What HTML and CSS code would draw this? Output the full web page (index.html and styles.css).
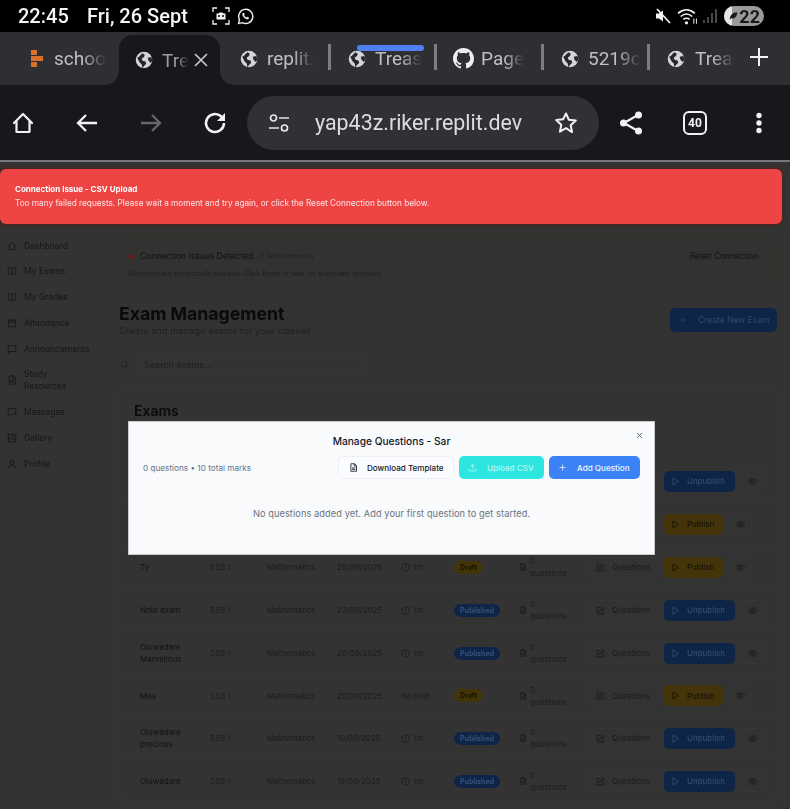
FILE: index.html
```html
<!DOCTYPE html>
<html lang="en">
<head>
<meta charset="utf-8">
<title>Exam Management</title>
<link rel="stylesheet" href="styles.css">
</head>
<body>
<svg class="defs" width="0" height="0" aria-hidden="true">
  <symbol id="globe" viewBox="0 0 24 24"><circle cx="12" cy="12" r="11" fill="#d4d5d8"/><path d="M3 9c3-1 4-4 7-6l3 2-1 3-3 2 1 3 4 1 1 3-3 3-2 3-1-5-3-3z M17 9l5-1 1 5-2 3-3-3z" fill="#26272b"/></symbol>
  <symbol id="i-home" viewBox="0 0 24 24"><path d="M3 12 12 3l9 9M5.500 10v11h13V10" fill="none" stroke="currentColor" stroke-width="2.200" stroke-linejoin="round" stroke-linecap="round"/></symbol>
  <symbol id="i-book" viewBox="0 0 24 24"><path d="M12 6c-2-2-5-2-9-2v15c4 0 7 0 9 2 2-2 5-2 9-2V4c-4 0-7 0-9 2zM12 6v15" fill="none" stroke="currentColor" stroke-width="2"/></symbol>
  <symbol id="i-cal" viewBox="0 0 24 24"><path d="M4 5h16v16H4zM4 10h16M8 2v5M16 2v5" fill="none" stroke="currentColor" stroke-width="2"/></symbol>
  <symbol id="i-msg" viewBox="0 0 24 24"><path d="M3 4h18v14H8l-5 4z" fill="none" stroke="currentColor" stroke-width="2" stroke-linejoin="round"/></symbol>
  <symbol id="i-file" viewBox="0 0 24 24"><path d="M5 2h10l5 5v15H5zM14 2v6h6M8 13h9M8 17h9" fill="none" stroke="currentColor" stroke-width="2.200" stroke-linejoin="round"/></symbol>
  <symbol id="i-img" viewBox="0 0 24 24"><path d="M3 3h18v18H3zM3 17l6-6 5 5 3-2 4 4" fill="none" stroke="currentColor" stroke-width="2.200"/><circle cx="15" cy="8" r="2" fill="currentColor"/></symbol>
  <symbol id="i-user" viewBox="0 0 24 24"><circle cx="12" cy="8" r="5" fill="none" stroke="currentColor" stroke-width="2"/><path d="M4 22c0-5 4-7 8-7s8 2 8 7" fill="none" stroke="currentColor" stroke-width="2"/></symbol>
  <symbol id="i-search" viewBox="0 0 24 24"><circle cx="11" cy="11" r="8" fill="none" stroke="currentColor" stroke-width="2"/><path d="m17 17 5 5" stroke="currentColor" stroke-width="2"/></symbol>
  <symbol id="i-plus" viewBox="0 0 24 24"><path d="M12 4v16M4 12h16" stroke="currentColor" stroke-width="2"/></symbol>
  <symbol id="i-clock" viewBox="0 0 24 24"><circle cx="12" cy="12" r="10" fill="none" stroke="currentColor" stroke-width="2"/><path d="M12 6v6l4 2" fill="none" stroke="currentColor" stroke-width="2"/></symbol>
  <symbol id="i-edit" viewBox="0 0 24 24"><path d="M12 4H3v17h17v-9" fill="none" stroke="currentColor" stroke-width="2.400"/><path d="m9 15 1-4L19 2l3 3-9 9z" fill="none" stroke="currentColor" stroke-width="2.200" stroke-linejoin="round"/></symbol>
  <symbol id="i-play" viewBox="0 0 24 24"><path d="M5 3l15 9-15 9z" fill="none" stroke="currentColor" stroke-width="2" stroke-linejoin="round"/></symbol>
  <symbol id="i-eye" viewBox="0 0 24 24"><path d="M1 12s4-7 11-7 11 7 11 7-4 7-11 7S1 12 1 12z" fill="none" stroke="currentColor" stroke-width="2"/><circle cx="12" cy="12" r="3.500" fill="none" stroke="currentColor" stroke-width="2"/></symbol>
  <symbol id="i-upload" viewBox="0 0 24 24"><path d="M3 15v6h18v-6M12 16V4M7 9l5-5 5 5" fill="none" stroke="currentColor" stroke-width="2"/></symbol>
</svg>

<header class="status soft">
  <span class="time">22:45</span>
  <span class="date">Fri, 26 Sept</span>
  <svg class="st-shot" viewBox="0 0 18 18"><path d="M1 5V1h4M13 1h4v4M17 13v4h-4M5 17H1v-4" fill="none" stroke="#f2f2f2" stroke-width="1.300"/><path d="M4.500 6.500h2l1-1h3l1 1h2v6h-9z" fill="#f2f2f2"/><circle cx="7" cy="9" r="1" fill="#000"/><circle cx="11" cy="9" r="1" fill="#000"/></svg>
  <svg class="st-wa" viewBox="0 0 24 24"><path d="M2 22l1.500-5.500A10 10 0 1 1 7.500 20.600z" fill="none" stroke="#f2f2f2" stroke-width="2" stroke-linejoin="round"/><path d="M8.500 7c-1.500 1-1.200 3 .5 5.500s4 4 6 3.500 2-2 1.800-2.500l-2.300-1.200-1 1.200c-1.500-.5-2.800-1.800-3.500-3.300l.9-1.100L10 7z" fill="#f2f2f2"/></svg>
  <span class="st-spacer"></span>
  <svg class="st-mute" viewBox="0 0 16 16"><path d="M1 5.500h3L8 2.500v11l-4-3H1z" fill="#f2f2f2"/><path d="M2 1l13 14" stroke="#f2f2f2" stroke-width="1.800"/><path d="M10 5l4 6" stroke="#000" stroke-width="1"/></svg>
  <svg class="st-wifi" viewBox="0 0 20 16"><path d="M1 5c5-4.500 11-4.500 16 0M3.500 8c3.500-3 7.500-3 11 0M6 10.800c2-1.500 4-1.500 6 0" fill="none" stroke="#f2f2f2" stroke-width="1.500"/><circle cx="9" cy="14" r="1.500" fill="#f2f2f2"/><path d="M16 10v5M18.500 10v5" stroke="#ddd" stroke-width="1"/></svg>
  <svg class="st-signal" viewBox="0 0 15 16"><path d="M1 12v3M5 9v6M9 5v10M13 1v14" stroke="#77787a" stroke-width="1.200"/></svg>
  <span class="battery"><span class="battery-fill"></span><svg class="battery-leaf" viewBox="0 0 12 12"><path d="M1 11C1 5 5 1 11 1c0 6-4 9-8 8z" fill="#1a1a1a"/></svg><span class="battery-num">22</span></span>
</header>

<nav class="tabs soft">
  <div class="tab tab-first">
    <svg class="favicon" viewBox="0 0 12 17"><path d="M0 0h6v5H0zM0 6h12v5H0zM0 12h6v5H0z" fill="#d9702c"/></svg>
    <span class="tab-text">schoo</span>
  </div>
  <div class="tab tab-active">
    <svg class="favicon"><use href="#globe"/></svg>
    <span class="tab-text tab-text-short">Tre</span>
    <svg class="tab-close" viewBox="0 0 14 14"><path d="M1 1l12 12M13 1 1 13" stroke="#c8c9cc" stroke-width="1.700"/></svg>
  </div>
  <div class="tab tab-sep">
    <svg class="favicon"><use href="#globe"/></svg>
    <span class="tab-text">replit.</span>
  </div>
  <div class="tab tab-sep">
    <svg class="favicon"><use href="#globe"/></svg>
    <span class="tab-text">Treas</span>
  </div>
  <div class="tab tab-sep tab-wide">
    <svg class="favicon fav-gh" viewBox="0 0 16 16"><path fill="#eeeeef" d="M8 0C3.580 0 0 3.580 0 8c0 3.540 2.290 6.530 5.470 7.590.4.070.55-.17.55-.38 0-.19-.01-.82-.01-1.490-2.010.37-2.530-.49-2.690-.94-.09-.23-.48-.94-.82-1.130-.28-.15-.68-.52-.01-.53.63-.01 1.080.58 1.230.82.72 1.210 1.870.87 2.330.66.070-.52.28-.87.51-1.070-1.780-.2-3.640-.89-3.640-3.950 0-.87.31-1.590.82-2.150-.08-.2-.36-1.020.08-2.120 0 0 .67-.21 2.200.82.64-.18 1.320-.27 2-.27.68 0 1.360.09 2 .27 1.530-1.040 2.200-.82 2.200-.82.44 1.100.16 1.920.08 2.120.51.56.82 1.270.82 2.150 0 3.070-1.870 3.750-3.650 3.950.29.25.54.73.54 1.480 0 1.070-.01 1.930-.01 2.200 0 .21.15.46.55.38A8.013 8.013 0 0 0 16 8c0-4.420-3.580-8-8-8z"/></svg>
    <span class="tab-text">Page</span>
  </div>
  <div class="tab tab-sep">
    <svg class="favicon"><use href="#globe"/></svg>
    <span class="tab-text">5219c</span>
  </div>
  <div class="tab tab-sep tab-last">
    <svg class="favicon"><use href="#globe"/></svg>
    <span class="tab-text">Treas</span>
  </div>
  <svg class="tab-new" viewBox="0 0 18 18"><path d="M9 0v18M0 9h18" stroke="#f2f2f3" stroke-width="2"/></svg>
  <span class="tab-progress"></span>
</nav>

<div class="toolbar soft">
  <div class="tool-group">
    <svg class="tool"><use href="#i-home"/></svg>
    <svg class="tool" viewBox="0 0 24 24"><path d="M22 12H3M11 4l-8 8 8 8" fill="none" stroke="currentColor" stroke-width="2.300"/></svg>
    <svg class="tool tool-off" viewBox="0 0 24 24"><path d="M2 12h19M13 4l8 8-8 8" fill="none" stroke="currentColor" stroke-width="2.300"/></svg>
    <svg class="tool" viewBox="0 0 24 24"><path d="M21 12a9 9 0 1 1-3-6.700L21 8" fill="none" stroke="currentColor" stroke-width="2.500"/><path d="M22 2v8h-8z" fill="currentColor"/></svg>
  </div>
  <div class="url">
    <svg class="url-tune" viewBox="0 0 20 18"><circle cx="4.500" cy="4" r="3" fill="none" stroke="#e6e6e8" stroke-width="1.700"/><path d="M10 4h10M0 14h10" stroke="#e6e6e8" stroke-width="1.700"/><circle cx="15.500" cy="14" r="3" fill="none" stroke="#e6e6e8" stroke-width="1.700"/></svg>
    <span class="url-text">yap43z.riker.replit.dev</span>
    <svg class="url-star" viewBox="0 0 24 24"><path d="M12 2.500l2.900 6.300 6.900.8-5.100 4.700 1.400 6.800L12 17.100l-6.100 3.500 1.400-6.800-5.100-4.700 6.900-.8z" fill="none" stroke="#f2f2f3" stroke-width="2" stroke-linejoin="round"/></svg>
  </div>
  <div class="tool-group">
    <svg class="tool" viewBox="0 0 24 24"><path d="M19 4 5 12l14 8" fill="none" stroke="currentColor" stroke-width="2.300"/><circle cx="19.500" cy="4" r="3.500" fill="currentColor"/><circle cx="4.500" cy="12" r="3.500" fill="currentColor"/><circle cx="19.500" cy="20" r="3.500" fill="currentColor"/></svg>
    <span class="tab-count">40</span>
    <svg class="tool" viewBox="0 0 24 24"><circle cx="12" cy="4.500" r="2.700" fill="currentColor"/><circle cx="12" cy="12" r="2.700" fill="currentColor"/><circle cx="12" cy="19.500" r="2.700" fill="currentColor"/></svg>
  </div>
</div>
<div class="rule"></div>

<div class="page soft">
  <aside class="sidebar">
    <a class="side-item"><svg class="side-icon"><use href="#i-home"/></svg>Dashboard</a>
    <a class="side-item"><svg class="side-icon"><use href="#i-book"/></svg>My Exams</a>
    <a class="side-item"><svg class="side-icon"><use href="#i-book"/></svg>My Grades</a>
    <a class="side-item"><svg class="side-icon"><use href="#i-cal"/></svg>Attendance</a>
    <a class="side-item"><svg class="side-icon"><use href="#i-msg"/></svg>Announcements</a>
    <a class="side-item side-item-tall"><svg class="side-icon"><use href="#i-file"/></svg><span>Study<br>Resources</span></a>
    <a class="side-item"><svg class="side-icon"><use href="#i-msg"/></svg>Messages</a>
    <a class="side-item"><svg class="side-icon"><use href="#i-img"/></svg>Gallery</a>
    <a class="side-item"><svg class="side-icon"><use href="#i-user"/></svg>Profile</a>
  </aside>

  <main class="main">
    <section class="alert">
      <div class="alert-body">
        <div class="alert-title"><span class="dot"></span><span>Connection Issues Detected</span><small>(5 failed requests)</small></div>
        <p class="alert-note">Requests are temporarily blocked. Click Reset or wait for automatic recovery.</p>
      </div>
      <span class="alert-btn">Reset Connection</span>
    </section>

    <section class="head">
      <div>
        <h1>Exam Management</h1>
        <p class="sub">Create and manage exams for your classes</p>
      </div>
      <span class="create"><svg class="create-plus"><use href="#i-plus"/></svg>Create New Exam</span>
    </section>

    <div class="search">
      <svg class="search-icon"><use href="#i-search"/></svg>
      <span class="search-input">Search exams...</span>
    </div>

    <section class="card">
      <h2>Exams</h2>
      <div class="rows">
        <div class="row">
          <div class="actions">
            <span class="act act-q"></span>
            <span class="act act-blue"><svg class="a-icon"><use href="#i-play"/></svg>Unpublish</span>
            <span class="act act-eye"><svg class="eye-icon"><use href="#i-eye"/></svg></span>
          </div>
        </div>
        <div class="row">
          <div class="actions">
            <span class="act act-q"></span>
            <span class="act act-gold"><svg class="a-icon"><use href="#i-play"/></svg>Publish</span>
            <span class="act act-eye"><svg class="eye-icon"><use href="#i-eye"/></svg></span>
          </div>
        </div>
        <div class="row">
          <span class="c-name">Ty</span><span>SSS 1</span><span>Mathematics</span><span>25/09/2025</span>
          <span class="c-dur"><svg class="clock"><use href="#i-clock"/></svg>1m</span>
          <span><b class="badge badge-draft">Draft</b></span>
          <span class="c-q"><svg class="q-icon"><use href="#i-file"/></svg><span>0<br>questions</span></span>
          <div class="actions">
            <span class="act act-q"><svg class="a-icon"><use href="#i-edit"/></svg>Questions</span>
            <span class="act act-gold"><svg class="a-icon"><use href="#i-play"/></svg>Publish</span>
            <span class="act act-eye"><svg class="eye-icon"><use href="#i-eye"/></svg></span>
          </div>
        </div>
        <div class="row">
          <span class="c-name">Note exam</span><span>SSS 1</span><span>Mathematics</span><span>23/09/2025</span>
          <span class="c-dur"><svg class="clock"><use href="#i-clock"/></svg>1m</span>
          <span><b class="badge badge-pub">Published</b></span>
          <span class="c-q"><svg class="q-icon"><use href="#i-file"/></svg><span>0<br>questions</span></span>
          <div class="actions">
            <span class="act act-q"><svg class="a-icon"><use href="#i-edit"/></svg>Questions</span>
            <span class="act act-blue"><svg class="a-icon"><use href="#i-play"/></svg>Unpublish</span>
            <span class="act act-eye"><svg class="eye-icon"><use href="#i-eye"/></svg></span>
          </div>
        </div>
        <div class="row">
          <span class="c-name">Oluwadare Marvellous</span><span>SSS 1</span><span>Mathematics</span><span>20/09/2025</span>
          <span class="c-dur"><svg class="clock"><use href="#i-clock"/></svg>1m</span>
          <span><b class="badge badge-pub">Published</b></span>
          <span class="c-q"><svg class="q-icon"><use href="#i-file"/></svg><span>0<br>questions</span></span>
          <div class="actions">
            <span class="act act-q"><svg class="a-icon"><use href="#i-edit"/></svg>Questions</span>
            <span class="act act-blue"><svg class="a-icon"><use href="#i-play"/></svg>Unpublish</span>
            <span class="act act-eye"><svg class="eye-icon"><use href="#i-eye"/></svg></span>
          </div>
        </div>
        <div class="row row-short">
          <span class="c-name">Mes</span><span>SSS 1</span><span>Mathematics</span><span>20/09/2025</span>
          <span class="c-dur">No limit</span>
          <span><b class="badge badge-draft">Draft</b></span>
          <span class="c-q"><svg class="q-icon"><use href="#i-file"/></svg><span>0<br>questions</span></span>
          <div class="actions">
            <span class="act act-q"><svg class="a-icon"><use href="#i-edit"/></svg>Questions</span>
            <span class="act act-gold"><svg class="a-icon"><use href="#i-play"/></svg>Publish</span>
            <span class="act act-eye"><svg class="eye-icon"><use href="#i-eye"/></svg></span>
          </div>
        </div>
        <div class="row">
          <span class="c-name">Oluwadare precious</span><span>SSS 1</span><span>Mathematics</span><span>19/09/2025</span>
          <span class="c-dur"><svg class="clock"><use href="#i-clock"/></svg>1m</span>
          <span><b class="badge badge-pub">Published</b></span>
          <span class="c-q"><svg class="q-icon"><use href="#i-file"/></svg><span>0<br>questions</span></span>
          <div class="actions">
            <span class="act act-q"><svg class="a-icon"><use href="#i-edit"/></svg>Questions</span>
            <span class="act act-blue"><svg class="a-icon"><use href="#i-play"/></svg>Unpublish</span>
            <span class="act act-eye"><svg class="eye-icon"><use href="#i-eye"/></svg></span>
          </div>
        </div>
        <div class="row">
          <span class="c-name">Oluwadare</span><span>SSS 1</span><span>Mathematics</span><span>19/09/2025</span>
          <span class="c-dur"><svg class="clock"><use href="#i-clock"/></svg>1m</span>
          <span><b class="badge badge-pub">Published</b></span>
          <span class="c-q"><svg class="q-icon"><use href="#i-file"/></svg><span>0<br>questions</span></span>
          <div class="actions">
            <span class="act act-q"><svg class="a-icon"><use href="#i-edit"/></svg>Questions</span>
            <span class="act act-blue"><svg class="a-icon"><use href="#i-play"/></svg>Unpublish</span>
            <span class="act act-eye"><svg class="eye-icon"><use href="#i-eye"/></svg></span>
          </div>
        </div>
      </div>
    </section>
  </main>

  <div class="toast">
    <strong>Connection Issue - CSV Upload</strong>
    <span>Too many failed requests. Please wait a moment and try again, or click the Reset Connection button below.</span>
  </div>

  <div class="modal">
    <svg class="modal-x" viewBox="0 0 10 10"><path d="M1.500 1.500l7 7M8.500 1.500l-7 7" stroke="#55606e" stroke-width="1.300"/></svg>
    <h3>Manage Questions - Sar</h3>
    <div class="modal-bar">
      <span class="modal-stats">0 questions • 10 total marks</span>
      <div class="modal-btns">
        <span class="mbtn mbtn-ghost"><svg class="m-icon"><use href="#i-file"/></svg>Download Template</span>
        <span class="mbtn mbtn-cyan"><svg class="m-icon"><use href="#i-upload"/></svg>Upload CSV</span>
        <span class="mbtn mbtn-blue"><svg class="m-icon"><use href="#i-plus"/></svg>Add Question</span>
      </div>
    </div>
    <p class="modal-empty">No questions added yet. Add your first question to get started.</p>
  </div>
</div>
</body>
</html>
```
FILE: styles.css
```css
* { box-sizing: border-box; }
html, body { margin: 0; padding: 0; }
body {
  width: 790px;
  height: 809px;
  overflow: hidden;
  background: #333333;
  font-family: Inter, "Liberation Sans", sans-serif;
  display: flex;
  flex-direction: column;
}
.defs { position: absolute; }
.soft { filter: blur(.35px); }

/* status bar */
.status {
  height: 32px;
  background: #000;
  color: #f4f4f4;
  display: flex;
  align-items: center;
  padding: 0 26px 0 18px;
  font-family: Roboto, sans-serif;
  font-weight: 500;
  font-size: 20px;
  flex: none;
}
.time { width: 69px; }
.date { width: 125px; }
.st-shot { width: 18px; height: 18px; }
.st-wa { width: 17px; height: 17px; margin-left: 7px; }
.st-spacer { flex: 1; }
.st-mute { width: 16px; height: 16px; }
.st-wifi { width: 21px; height: 17px; margin-left: 6px; }
.st-signal { width: 15px; height: 16px; margin-left: 5px; }
.battery {
  position: relative;
  width: 40px;
  height: 20px;
  margin-left: 6px;
  border-radius: 10px;
  background: #9a9a9a;
  overflow: hidden;
  display: flex;
  align-items: center;
  justify-content: flex-end;
  padding-right: 4px;
}
.battery-fill { position: absolute; left: 0; top: 0; bottom: 0; width: 8px; background: #e6e6e6; }
.battery-leaf { position: absolute; left: 5px; top: 5px; width: 9px; height: 10px; }
.battery-num { position: relative; color: #1a1a1a; font-size: 18px; font-weight: 700; }

/* tabs */
.tabs {
  position: relative;
  height: 53px;
  background: #2e2f33;
  display: flex;
  flex: none;
  font-family: Roboto, sans-serif;
  font-size: 19px;
  color: #bfc0c3;
}
.tab { position: relative; display: flex; align-items: center; height: 53px; padding-left: 19px; width: 106px; }
.tab-first { width: 119px; padding-left: 31px; }
.tab-active {
  width: 101px;
  padding-left: 16px;
  margin-top: 3px;
  height: 50px;
  background: #17181c;
  border-radius: 14px 14px 0 0;
}
.tab-active::before,
.tab-active::after {
  content: "";
  position: absolute;
  bottom: 0;
  width: 14px;
  height: 14px;
}
.tab-active::before { left: -14px; background: radial-gradient(circle at 0 0, transparent 13.500px, #17181c 14px); }
.tab-active::after { right: -14px; background: radial-gradient(circle at 100% 0, transparent 13.500px, #17181c 14px); }
.tab-sep + .tab-sep::before {
  content: "";
  position: absolute;
  left: -1px;
  top: 12px;
  height: 26px;
  width: 3px;
  background: #7d7e82;
}
.tab-active + .tab-sep { width: 109px; padding-left: 20px; }
.tab-wide { width: 107px; }
.tab-last { width: 96px; }
.favicon { width: 18px; height: 18px; flex: none; }
.tab-first .favicon { width: 12px; height: 17px; }
.fav-gh { width: 21px; height: 21px; margin-left: -1px; }
.tab-text {
  display: block;
  margin-left: 9px;
  white-space: nowrap;
  -webkit-mask-image: linear-gradient(to right, #000 55%, transparent 100%);
  mask-image: linear-gradient(to right, #000 55%, transparent 100%);
}
.tab-first .tab-text { margin-left: 11px; }
.fav-gh + .tab-text { margin-left: 7px; }
.tab-last .tab-text { margin-left: 10px; -webkit-mask-image: linear-gradient(to right, #000 35%, transparent 85%); mask-image: linear-gradient(to right, #000 35%, transparent 85%); }
.tab-text-short { color: #9b9c9f; }
.tab-close { width: 14px; height: 14px; margin-left: 5px; }
.tab-new { position: absolute; left: 750px; top: 16px; width: 18px; height: 18px; }
.tab-progress { position: absolute; left: 357px; top: 13px; width: 67px; height: 6px; border-radius: 3px; background: #4f7ff0; }

/* toolbar */
.toolbar {
  height: 75px;
  background: #17181c;
  display: flex;
  align-items: center;
  padding-left: 11px;
  flex: none;
  color: #f2f2f3;
}
.tool-group { display: flex; align-items: center; gap: 40px; }
.tool { width: 24px; height: 24px; display: block; color: #f2f2f3; }
.tool-off { color: #66676a; }
.url {
  width: 352px;
  height: 54px;
  margin: 0 20px;
  border-radius: 27px;
  background: #303136;
  display: flex;
  align-items: center;
  padding-left: 22px;
  font-family: Roboto, sans-serif;
  font-size: 21.400px;
  color: #dcdde0;
}
.url-tune { width: 20px; height: 18px; }
.url-text { margin-left: 26px; width: 208px; white-space: nowrap; }
.url-star { width: 24px; height: 24px; margin-left: 31px; }
.tab-count {
  width: 24px;
  height: 24px;
  border: 2.500px solid #f2f2f3;
  border-radius: 6px;
  font-family: Roboto, sans-serif;
  font-weight: 700;
  font-size: 12px;
  display: flex;
  align-items: center;
  justify-content: center;
}
.rule { height: 2px; background: #77787b; flex: none; }

/* page */
.page {
  position: relative;
  flex: 1;
  display: flex;
  overflow: hidden;
  color: #141414;
  font-size: 8.500px;
}
.sidebar { width: 119px; flex: none; padding: 77px 0 0 7px; display: flex; flex-direction: column; gap: 12.900px; color: #161616; }
.side-item { display: flex; align-items: center; gap: 7px; height: 13px; line-height: 12px; }
.side-item-tall { height: 24px; }
.side-icon { width: 10px; height: 10px; flex: none; color: #161616; }

.main { width: 658px; flex: none; padding-top: 73px; }
.alert {
  height: 54px;
  border: 1px solid #35342b;
  border-radius: 8px;
  background: #323230;
  display: flex;
  justify-content: space-between;
  padding: 14px 12px 0 9px;
}
.alert-title { display: flex; align-items: center; gap: 6px; height: 12px; font-size: 8.500px; color: #121212; }
.alert-title small { font-size: 6.500px; color: #222; margin-left: -1px; }
.dot { width: 5px; height: 5px; border-radius: 50%; background: #6d1a1a; }
.alert-note { margin: 7px 0 0; font-size: 7px; color: #1f1f1f; white-space: nowrap; }
.alert-btn { font-size: 8.300px; color: #121212; padding: 1px 5px 0 0; }

.head { display: flex; justify-content: space-between; align-items: flex-start; margin-top: 14px; }
h1 { margin: 0; font-size: 17.700px; line-height: 22px; font-weight: 700; color: #0a0a0a; }
.sub { margin: 0; font-size: 9px; line-height: 11px; letter-spacing: .2px; color: #1f1f1f; }
.create {
  width: 107px;
  height: 24px;
  margin-top: 5px;
  border-radius: 5px;
  background: #0f2548;
  color: #2f4a69;
  display: flex;
  align-items: center;
  padding-left: 9px;
  gap: 11px;
}
.create-plus { width: 8px; height: 8px; }

.search { display: flex; align-items: center; margin-top: 17px; gap: 7px; padding-left: 1px; }
.search-icon { width: 9px; height: 9px; color: #1c1c1c; }
.search-input { width: 227px; height: 23px; border: 1px solid #363636; border-radius: 6px; padding-left: 7px; display: flex; align-items: center; font-size: 9px; color: #1e1e1e; }

.card { margin-top: 11px; border: 1px solid #363636; border-radius: 8px; padding-top: 14px; }
h2 { margin: 0 0 0 14px; font-size: 14px; line-height: 17px; font-weight: 600; color: #0a0a0a; }
.rows { margin-top: 41px; }
.row {
  display: grid;
  grid-template-columns: 70px 57px 70px 64px 53px 65px 69px auto;
  align-items: center;
  height: 43px;
  padding-left: 20px;
  border-bottom: 1px solid #353535;
  font-size: 8px;
  line-height: 12px;
  color: #1c1c1c;
}
.row-short { height: 42px; }
.c-name { color: #121212; padding-right: 8px; }
.c-dur { display: flex; align-items: center; gap: 3px; }
.clock { width: 9px; height: 9px; }
.badge { display: inline-block; height: 13px; line-height: 13px; padding: 0 6px; border-radius: 7px; font-size: 7px; font-weight: 700; }
.badge-draft { background: #433509; color: #141005; }
.badge-pub { background: #0f2548; color: #35527a; }
.c-q { display: flex; align-items: center; gap: 3px; }
.q-icon { width: 8px; height: 8px; color: #181818; }
.actions { grid-column: 8; display: flex; align-items: center; gap: 5px; }
.act { height: 21px; border-radius: 5px; display: flex; align-items: center; }
.act-q { width: 71px; border: 1px solid #363636; padding-left: 7px; gap: 7px; color: #1a1a1a; }
.act-gold { width: 59px; background: #433509; color: #100d05; padding-left: 7px; gap: 7px; }
.act-blue { width: 71px; background: #0f2548; color: #35527a; padding-left: 7px; gap: 7px; }
.act-eye { width: 24px; border: 1px solid #363636; justify-content: center; }
.a-icon { width: 9px; height: 9px; flex: none; }
.eye-icon { width: 9px; height: 9px; color: #141414; }

/* toast */
.toast {
  position: absolute;
  left: 0;
  top: 7px;
  width: 782px;
  height: 55px;
  border-radius: 6px;
  background: #ef4444;
  box-shadow: 0 0 4px rgba(110, 15, 15, .9);
  color: #fff;
  padding: 15px 15px 0;
  display: flex;
  flex-direction: column;
  gap: 3px;
  font-size: 8.240px;
  line-height: 11px;
}
.toast strong { font-weight: 700; font-size: 8px; }
.toast span { color: #fde3e3; }

/* modal */
.modal {
  position: absolute;
  left: 128px;
  top: 259px;
  width: 527px;
  height: 134px;
  background: #f8fafc;
  border: 1px solid #c9cbce;
  padding: 13px 14px 0 14px;
}
.modal h3 { margin: 0; text-align: center; font-size: 10.200px; line-height: 13px; font-weight: 500; color: #0f172a; }
.modal-x { position: absolute; right: 11px; top: 10px; width: 7px; height: 7px; }
.modal-bar { display: flex; justify-content: space-between; align-items: center; margin-top: 8px; }
.modal-stats { font-size: 8.200px; color: #64748b; }
.modal-btns { display: flex; gap: 5px; font-size: 8.100px; font-weight: 500; }
.mbtn { height: 23px; border-radius: 5px; display: flex; align-items: center; }
.mbtn-ghost { width: 116px; border: 1px solid #eef0f4; background: #fbfcfe; color: #111827; padding-left: 10px; gap: 9px; }
.mbtn-cyan { width: 85px; background: #2ee6e0; color: #b8f5f3; padding-left: 9px; gap: 10px; }
.mbtn-blue { width: 91px; background: #3b82f6; color: #eef5ff; padding-left: 9px; gap: 10px; }
.m-icon { width: 9px; height: 9px; flex: none; }
.modal-empty { margin: 29px 0 0; text-align: center; font-size: 9.200px; color: #6b7280; letter-spacing: .1px; }
```
